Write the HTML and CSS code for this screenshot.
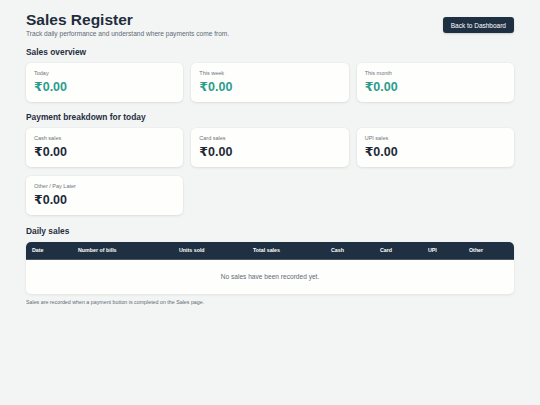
FILE: index.html
```html
<!DOCTYPE html>
<html>
<head>
<meta charset="utf-8">
<link rel="stylesheet" href="styles.css">
</head>
<body>
<div class="page">
  <header class="top">
    <div>
      <h1 class="title">Sales Register</h1>
      <p class="subtitle">Track daily performance and understand where payments come from.</p>
    </div>
    <button class="btn">Back to Dashboard</button>
  </header>

  <h2 class="section">Sales overview</h2>
  <div class="grid">
    <div class="card"><div class="label">Today</div><div class="value teal">₹0.00</div></div>
    <div class="card"><div class="label">This week</div><div class="value teal">₹0.00</div></div>
    <div class="card"><div class="label">This month</div><div class="value teal">₹0.00</div></div>
  </div>

  <h2 class="section">Payment breakdown for today</h2>
  <div class="grid">
    <div class="card"><div class="label">Cash sales</div><div class="value">₹0.00</div></div>
    <div class="card"><div class="label">Card sales</div><div class="value">₹0.00</div></div>
    <div class="card"><div class="label">UPI sales</div><div class="value">₹0.00</div></div>
    <div class="card"><div class="label">Other / Pay Later</div><div class="value">₹0.00</div></div>
  </div>

  <h2 class="section section-table">Daily sales</h2>
  <div class="table-wrap">
    <table class="table">
      <colgroup>
        <col class="c1"><col class="c2"><col class="c3"><col class="c4"><col class="c5"><col class="c6"><col class="c7"><col class="c8">
      </colgroup>
      <thead>
        <tr><th>Date</th><th>Number of bills</th><th>Units sold</th><th>Total sales</th><th>Cash</th><th>Card</th><th>UPI</th><th>Other</th></tr>
      </thead>
      <tbody>
        <tr><td class="empty" colspan="8">No sales have been recorded yet.</td></tr>
      </tbody>
    </table>
  </div>
  <p class="note">Sales are recorded when a payment button is completed on the Sales page.</p>
</div>
</body>
</html>
```
FILE: styles.css
```css
* { box-sizing: border-box; }
html, body { margin: 0; padding: 0; }
body {
  background: #f3f5f4;
  font-family: "Liberation Sans", Arial, "DejaVu Sans", sans-serif;
  color: #1f2d3d;
}
.page {
  width: 488px;
  margin: 0 auto;
  padding-top: 11px;
}
.top {
  display: flex;
  justify-content: space-between;
  align-items: flex-start;
}
.title {
  margin: 0;
  font-size: 15.5px;
  font-weight: 700;
  line-height: 18px;
  color: #1f2d3d;
}
.subtitle {
  margin: 1px 0 0;
  font-size: 6.6px;
  color: #5f6b76;
}
.btn {
  margin-top: 6px;
  height: 16px;
  padding: 0 8px;
  border: none;
  border-radius: 3px;
  background: #1f3042;
  color: #fff;
  font-family: inherit;
  font-size: 6.5px;
  box-shadow: 0 1px 2px rgba(0,0,0,0.15);
}
.section {
  margin: 10px 0 6px;
  font-size: 8.4px;
  font-weight: 700;
  color: #1f2d3d;
  line-height: 10px;
}
.section-table { margin-top: 11px; }
.grid {
  display: grid;
  grid-template-columns: repeat(3, 1fr);
  column-gap: 8px;
  row-gap: 9px;
}
.card {
  background: #fefefc;
  border-radius: 5px;
  height: 39px;
  padding: 7px 8px 0;
  box-shadow: 0 1px 3px rgba(0,0,0,0.08), 0 0 0 0.5px rgba(0,0,0,0.03);
}
.label {
  font-size: 5.5px;
  color: #6b7480;
  line-height: 7px;
}
.value {
  margin-top: 3px;
  font-size: 12.5px;
  font-weight: 700;
  line-height: 15px;
  color: #1f2937;
}
.value.teal { color: #2b9c8e; }
.table-wrap {
  background: #fefefc;
  border-radius: 5px;
  overflow: hidden;
  box-shadow: 0 1px 3px rgba(0,0,0,0.08);
}
.table {
  width: 100%;
  border-collapse: collapse;
  table-layout: fixed;
}
.c1 { width: 46px; } .c2 { width: 101px; } .c3 { width: 74px; } .c4 { width: 78px; }
.c5 { width: 49px; } .c6 { width: 48px; } .c7 { width: 41px; } .c8 { width: 51px; }
th {
  background: #1f3042;
  color: #fff;
  font-size: 5.3px;
  font-weight: 700;
  text-align: left;
  height: 17px;
  padding: 0 0 0 6px;
  border-bottom: 1px solid #4a5866;
}
.empty {
  text-align: center;
  font-size: 6.6px;
  color: #5f6b76;
  height: 35px;
  padding: 0;
}
.note {
  margin: 5px 0 0;
  font-size: 5.3px;
  color: #5f6b76;
}
```
